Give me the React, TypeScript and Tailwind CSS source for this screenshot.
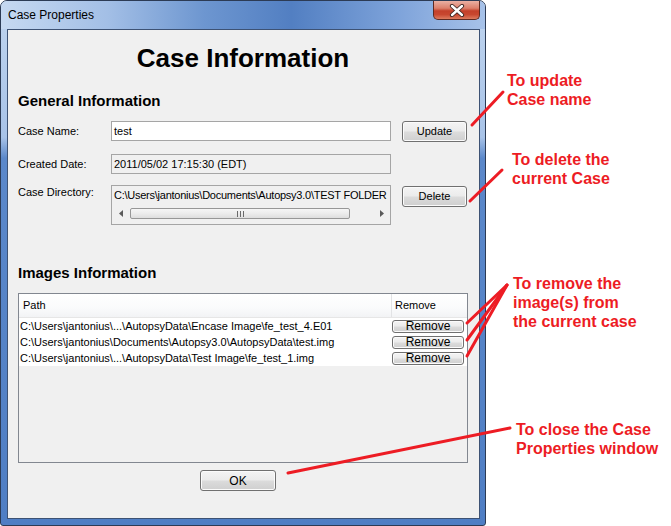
import React from 'react';

const rows = [
  'C:\\Users\\jantonius\\...\\AutopsyData\\Encase Image\\fe_test_4.E01',
  'C:\\Users\\jantonius\\Documents\\Autopsy3.0\\AutopsyData\\test.img',
  'C:\\Users\\jantonius\\...\\AutopsyData\\Test Image\\fe_test_1.img',
];

const WinButton = ({ label, className }: { label: string; className?: string }) => (
  <button
    className={`flex items-center justify-center rounded-[3px] border border-[#707070] bg-[linear-gradient(180deg,#f4f4f4_0%,#ebebeb_48%,#dcdcdc_52%,#cfcfcf_100%)] text-[11px] leading-none text-black shadow-[inset_0_0_0_1px_#fbfbfb] ${className ?? ''}`}
  >
    {label}
  </button>
);

const Scrollbar = () => (
  <div className="flex h-[17px] items-center">
    <div className="flex w-[17px] items-center justify-center">
      <svg width="4" height="7" viewBox="0 0 4 7">
        <path d="M4 0 L0 3.5 L4 7 Z" fill="#5a5a5a" />
      </svg>
    </div>
    <div className="ml-[1px] flex h-[11px] w-[220px] items-center justify-center rounded-[2px] border border-[#979797] bg-[linear-gradient(180deg,#f6f6f6_0%,#ececec_50%,#dedede_100%)]">
      <svg width="7" height="6" viewBox="0 0 7 6">
        <path d="M0.5 0 V6 M3.5 0 V6 M6.5 0 V6" stroke="#6a6a6a" strokeWidth="1" />
      </svg>
    </div>
    <div className="flex-1" />
    <div className="flex w-[17px] items-center justify-center">
      <svg width="4" height="7" viewBox="0 0 4 7">
        <path d="M0 0 L4 3.5 L0 7 Z" fill="#5a5a5a" />
      </svg>
    </div>
  </div>
);

const Note = ({ lines, className }: { lines: string[]; className: string }) => (
  <div className={`absolute text-[16px] font-bold leading-[19px] text-[#ed1c24] ${className}`}>
    {lines.map((l) => (
      <div key={l} className="whitespace-nowrap">{l}</div>
    ))}
  </div>
);

export default function App() {
  return (
    <div className="relative h-[526px] w-[671px] overflow-hidden bg-white font-['Liberation_Sans',Arial,sans-serif] text-black">
      {/* window */}
      <div className="flex h-[526px] w-[486px] flex-col rounded-t-[7px] rounded-b-[3px] border border-[#2c3b55] bg-[linear-gradient(180deg,#c0d5ef_0%,#a8c3e8_26%,#5b88ca_30%,#4f7ec4_100%)]">
        <div className="flex h-[28px] items-start justify-between rounded-t-[6px] bg-[linear-gradient(90deg,#c6d9f1_0%,#a3bfe6_22%,#6d96d0_42%,#527fc2_60%,#7ea3da_82%,#a7c2e9_100%)]">
          <span className="ml-[7px] mt-[7px] text-[12px] leading-[15px]">Case Properties</span>
          <div className="mr-[5px] flex h-[19px] w-[47px] items-center justify-center rounded-b-[5px] border border-t-0 border-[#5e2a22] bg-[linear-gradient(180deg,#eab0a3_0%,#dc7f6b_40%,#c4402a_55%,#c8472f_75%,#dd7b5f_100%)]">
            <svg width="16" height="13" viewBox="0 0 16 13">
              <path d="M3 2 L13 11 M13 2 L3 11" stroke="#3b2622" strokeWidth="4.2" strokeLinecap="round" />
              <path d="M3 2 L13 11 M13 2 L3 11" stroke="#ffffff" strokeWidth="2.4" strokeLinecap="round" />
            </svg>
          </div>
        </div>

        <div className="mb-[6px] ml-[6px] mr-[5px] flex flex-1 flex-col border border-[#3d5274] bg-[#f0f0f0] pl-[10px] pr-[11px] text-[11px]">
          <h1 className="pt-[13px] text-center text-[26px] font-bold leading-[30px]">Case Information</h1>
          <h2 className="mt-[19px] text-[15px] font-bold leading-[18px]">General Information</h2>

          <div className="mt-[11px] flex h-[20px] items-center">
            <span className="w-[93px]">Case Name:</span>
            <div className="flex h-[20px] w-[280px] items-center border border-[#a5a5a5] bg-white pl-[2px]">test</div>
            <WinButton label="Update" className="ml-[11px] h-[21px] w-[65px]" />
          </div>

          <div className="mt-[13px] flex h-[20px] items-center">
            <span className="w-[93px]">Created Date:</span>
            <div className="flex h-[20px] w-[280px] items-center border border-[#a5a5a5] pl-[2px]">2011/05/02 17:15:30 (EDT)</div>
          </div>

          <div className="mt-[11px] flex items-start">
            <span className="w-[93px] pt-[1px] leading-[13px]">Case Directory:</span>
            <div className="h-[40px] w-[280px] border border-[#a5a5a5]">
              <div className="flex h-[19px] items-center whitespace-nowrap pl-[2px] tracking-[-0.25px]">
                C:\Users\jantonius\Documents\Autopsy3.0\TEST FOLDER
              </div>
              <Scrollbar />
            </div>
            <WinButton label="Delete" className="ml-[11px] mt-[1px] h-[21px] w-[65px]" />
          </div>

          <h2 className="mt-[39px] text-[15px] font-bold leading-[18px]">Images Information</h2>

          <div className="mt-[11px] h-[170px] w-[450px] border border-[#828790]">
            <div className="flex h-[24px] border-b border-[#e6e6e6] bg-[linear-gradient(180deg,#ffffff_0%,#fafbfc_60%,#f2f3f5_100%)]">
              <div className="flex w-[372px] items-center pl-[4px]">Path</div>
              <div className="w-[1px] bg-[#e2e3e5]" />
              <div className="flex w-[73px] items-center pl-[3px]">Remove</div>
            </div>
            {rows.map((r) => (
              <div key={r} className="flex h-[16px] bg-white">
                <div className="flex w-[373px] items-center whitespace-nowrap pl-[1px]">{r}</div>
                <div className="flex w-[73px] items-center">
                  <WinButton label="Remove" className="h-[13px] w-[72px] text-[12px]" />
                </div>
              </div>
            ))}
          </div>

          <div className="mt-[7px] flex">
            <WinButton label="OK" className="ml-[182px] h-[21px] w-[76px] text-[12px]" />
          </div>
        </div>
      </div>

      {/* annotations */}
      <svg className="pointer-events-none absolute left-0 top-0" width="671" height="526" viewBox="0 0 671 526">
        <g stroke="#ed1c24" strokeWidth="3" strokeLinecap="round" fill="none">
          <path d="M472 125 L503 92" />
          <path d="M470 201 L502 170" />
          <path d="M467 323 L507 285" />
          <path d="M467 340 L507 285" />
          <path d="M467 356 L507 285" />
          <path d="M288 473 L510 428" />
        </g>
      </svg>
      <Note lines={['To update', 'Case name']} className="left-[507px] top-[71px]" />
      <Note lines={['To delete the', 'current Case']} className="left-[512px] top-[150px]" />
      <Note lines={['To remove the', 'image(s) from', 'the current case']} className="left-[513px] top-[274px]" />
      <Note lines={['To close the Case', 'Properties window']} className="left-[516px] top-[420px]" />
    </div>
  );
}
